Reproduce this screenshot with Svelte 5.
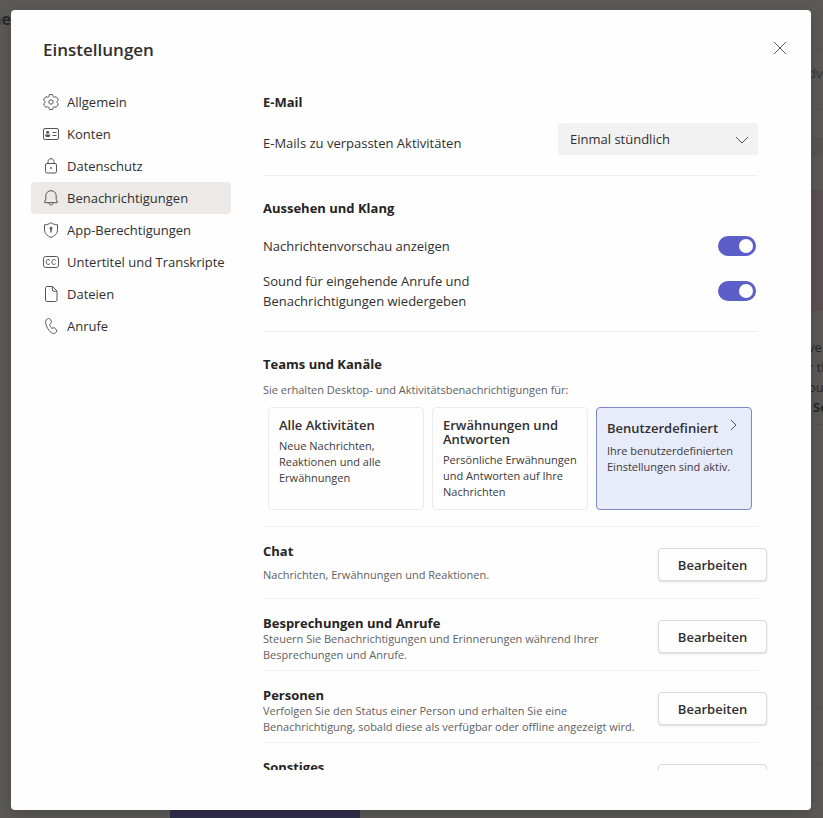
<script>
  const nav = [
    { id: 'gear', label: 'Allgemein' },
    { id: 'card', label: 'Konten' },
    { id: 'lock', label: 'Datenschutz' },
    { id: 'bell', label: 'Benachrichtigungen' },
    { id: 'shield', label: 'App-Berechtigungen' },
    { id: 'cc', label: 'Untertitel und Transkripte' },
    { id: 'file', label: 'Dateien' },
    { id: 'phone', label: 'Anrufe' }
  ];
  const modes = [
    { title: 'Alle Aktivitäten', text: 'Neue Nachrichten, Reaktionen und alle Erwähnungen' },
    { title: 'Erwähnungen und Antworten', text: 'Persönliche Erwähnungen und Antworten auf Ihre Nachrichten' },
    { title: 'Benutzerdefiniert', text: 'Ihre benutzerdefinierten Einstellungen sind aktiv.', more: true }
  ];
  const groups = [
    { title: 'Chat', text: 'Nachrichten, Erwähnungen und Reaktionen.', airy: true },
    { title: 'Besprechungen und Anrufe', text: 'Steuern Sie Benachrichtigungen und Erinnerungen während Ihrer Besprechungen und Anrufe.' },
    { title: 'Personen', text: 'Verfolgen Sie den Status einer Person und erhalten Sie eine Benachrichtigung, sobald diese als verfügbar oder offline angezeigt wird.' },
    { title: 'Sonstiges', text: '' }
  ];
  let active = $state('bell');
  let mode = $state(2);
  let preview = $state(true);
  let sound = $state(true);
  let mail = $state('hourly');
</script>

<div class="app">
  <div class="page" aria-hidden="true">
    <div class="left"><b>ne</b></div>
    <div class="tile"></div>
    <div class="right">
      <div class="bar"></div>
      <div class="tab">dv</div>
      <div class="strip"></div>
      <div class="band"></div>
      <div class="blank"></div>
      <div class="pink"></div>
      <div class="copy">ve<br />r th<br />ou<br /><b>So</b></div>
      <div class="post"></div>
      <div class="reply"></div>
    </div>
  </div>

  <div class="dialog" role="dialog" aria-labelledby="title">
    <header>
      <h1 id="title">Einstellungen</h1>
      <button class="close" aria-label="Schließen">
        <svg width="14" height="14" viewBox="0 0 14 14"><path d="M1 1l12 12M13 1L1 13" /></svg>
      </button>
    </header>

    <div class="body">
      <nav>
        {#each nav as item}
          <button class:active={active === item.id} onclick={() => (active = item.id)}>
            <svg width="16" height="16" viewBox="0 0 16 16">
              {#if item.id === 'gear'}
                <path d="M6.300.6 6 2.300c-.1.700-.8 1.100-1.500.9L2.900 2.600C1.800 3.600 1 4.900.6 6.200l1.300 1.100c.5.400.5 1 0 1.400L.6 9.800c.4 1.400 1.200 2.600 2.300 3.600l1.600-.6c.7-.2 1.400.2 1.500.9l.3 1.700c1.200.3 2.300.3 3.400 0l.3-1.700c.1-.7.8-1.100 1.500-.9l1.600.6c1.100-1 1.900-2.200 2.300-3.600l-1.300-1.100c-.5-.4-.5-1 0-1.400l1.300-1.100c-.4-1.300-1.200-2.600-2.300-3.600l-1.600.6c-.7.200-1.400-.2-1.500-.9L9.700.6c-1.100-.3-2.200-.3-3.400 0z" />
                <circle cx="8" cy="8" r="2.200" />
              {:else if item.id === 'card'}
                <rect x=".5" y="2.500" width="15" height="11" rx="1.500" />
                <path d="M9.500 6.500h4M9.500 9.500h4" />
                <circle class="fill" cx="4.700" cy="6.200" r="1.500" />
                <path class="fill" d="M2.200 8.500h5v1c0 1-1.100 1.600-2.500 1.600S2.200 10.500 2.200 9.500z" />
              {:else if item.id === 'lock'}
                <rect x="2.500" y="5.500" width="11" height="9.500" rx="1.500" />
                <path d="M5 5.500V3.800C5 2 6.200.7 8 .7s3 1.300 3 3.100v1.700" />
                <circle class="fill" cx="8" cy="10" r=".9" />
              {:else if item.id === 'bell'}
                <path d="M8 .7C5 .7 2.800 3 2.800 5.800v3.500l-1.200 2.800c-.1.300.1.600.4.600h12c.3 0 .5-.3.4-.6l-1.200-2.800V5.800C13.200 3 11 .7 8 .7zM6 12.800c.2 1.400 1 2.200 2 2.200s1.800-.8 2-2.200" />
              {:else if item.id === 'shield'}
                <path d="M8 .7c1.800 1.300 4 2 6.500 2.100v5c0 3.600-2.500 6.100-6.500 7.600-4-1.500-6.500-4-6.500-7.600v-5C4 2.700 6.200 2 8 .7z" />
                <path class="fill" d="M8 4.800a1.500 1.500 0 0 1 .7 2.800V10.500H7.300V7.600A1.500 1.500 0 0 1 8 4.800z" />
              {:else if item.id === 'cc'}
                <rect x=".5" y="2.500" width="15" height="11" rx="2.200" />
                <path d="M7 6.400C6.400 5.700 5.700 5.500 5 5.600 3.800 5.700 3.200 6.700 3.200 8s.6 2.300 1.800 2.400c.7.1 1.400-.1 2-.8M12.700 6.400c-.6-.7-1.300-.9-2-.8C9.500 5.700 8.900 6.700 8.900 8s.6 2.300 1.800 2.400c.7.1 1.400-.1 2-.8" />
              {:else if item.id === 'file'}
                <path d="M4 .5h5.500l4.500 4.500v9c0 .8-.7 1.500-1.500 1.500H4c-.8 0-1.500-.7-1.500-1.500V2C2.500 1.200 3.200.5 4 .5zM9.300.7V4c0 .8.500 1.200 1.200 1.200h3.300" />
              {:else}
                <path d="M4.600.9 5.700.6c.8-.2 1.500.2 1.800.9l.8 1.900c.3.600.1 1.300-.4 1.800L6.600 6.400c0 1 1.300 3.300 2.300 3.900l1.700-.5c.7-.2 1.300.1 1.700.6l1.200 1.700c.4.600.4 1.400-.1 1.900l-.8.700c-.8.700-1.900 1-2.900.600C6.200 14 2.600 8.200 2.600 3.600c0-1.200.8-2.300 2-2.700z" />
              {/if}
            </svg>
            {item.label}
          </button>
        {/each}
      </nav>

      <main>
        <section>
          <h2>E-Mail</h2>
          <div class="row mail">
            <label for="mail">E-Mails zu verpassten Aktivitäten</label>
            <div class="select">
              <select id="mail" bind:value={mail}>
                <option value="hourly">Einmal stündlich</option>
                <option value="daily">Täglich</option>
                <option value="off">Aus</option>
              </select>
              <svg width="14" height="8" viewBox="0 0 14 8"><path d="M1 1l6 6 6-6" /></svg>
            </div>
          </div>
        </section>

        <section>
          <h2>Aussehen und Klang</h2>
          <div class="rows">
            <div class="row">
              <label for="preview">Nachrichtenvorschau anzeigen</label>
              <input id="preview" type="checkbox" role="switch" bind:checked={preview} />
            </div>
            <div class="row">
              <label for="sound">Sound für eingehende Anrufe und Benachrichtigungen wiedergeben</label>
              <input id="sound" type="checkbox" role="switch" bind:checked={sound} />
            </div>
          </div>
        </section>

        <section class="teams">
          <h2>Teams und Kanäle</h2>
          <p class="hint">Sie erhalten Desktop- und Aktivitätsbenachrichtigungen für:</p>
          <div class="cards">
            {#each modes as m, i}
              <button class:selected={mode === i} aria-pressed={mode === i} onclick={() => (mode = i)}>
                <span class="head">
                  <strong>{m.title}</strong>
                  {#if m.more}
                    <svg width="7" height="12" viewBox="0 0 7 12"><path d="M1 1l5 5-5 5" /></svg>
                  {/if}
                </span>
                <span class="text">{m.text}</span>
              </button>
            {/each}
          </div>
        </section>

        {#each groups as g}
          <section class="group">
            <div class="about" class:airy={g.airy}>
              <h2>{g.title}</h2>
              <p class="hint">{g.text}</p>
            </div>
            <button class="edit" aria-label={`${g.title} bearbeiten`}>Bearbeiten</button>
          </section>
        {/each}
      </main>
    </div>
  </div>
</div>

<style>
  :global(body) { margin: 0; }
  .app, .app * { box-sizing: border-box; }
  .app {
    position: relative;
    height: 100vh;
    padding: 10px 12px 8px 11px;
    overflow: hidden;
    background: #5b5a58;
    color: #302f2e;
    font: 13px/20px "Segoe UI", "Open Sans", "Noto Sans", sans-serif;
  }
  button, select { font: inherit; color: inherit; margin: 0; }
  button { cursor: pointer; }
  svg { fill: none; stroke: #555; stroke-width: 1; flex: none; }
  svg .fill { fill: #555; stroke: none; }
  h1, h2, p { margin: 0; }

  .page { position: absolute; inset: 0; display: flex; justify-content: space-between; color: #292827; }
  .left { width: 11px; height: 50px; padding-top: 9px; border-bottom: 1px solid #575654; font-size: 16px; display: flex; justify-content: flex-end; overflow: hidden; }
  .tile { width: 190px; height: 10px; align-self: flex-end; margin-right: auto; margin-left: 159px; background: #312f4c; }
  .right { width: 15px; overflow: hidden; white-space: nowrap; display: flex; flex-direction: column; }
  .right > div { flex: none; border-bottom: 1px solid #545351; }
  .bar { height: 50px; }
  .tab { height: 60px; padding-top: 13px; color: #383735; }
  .strip { height: 29px; }
  .band { height: 16px; background: #575654; }
  .blank { height: 36px; }
  .right .pink { height: 120px; background: #5c5053; border: 0; }
  .copy { height: 114px; padding-top: 26px; }
  .copy b { padding-left: 5px; }
  .post { height: 283px; }
  .reply { height: 57px; }

  .dialog {
    position: relative;
    height: 100%;
    padding: 22px 32px 40px 20px;
    display: flex;
    flex-direction: column;
    border-radius: 4px;
    background: #fefefe;
    box-shadow: 0 4px 16px rgba(0, 0, 0, 0.2);
  }
  header { height: 54px; padding: 4px 0 0 12px; display: flex; align-items: flex-start; justify-content: space-between; }
  h1 { font-size: 17px; line-height: 28px; font-weight: 600; }
  .close { width: 28px; height: 24px; margin-right: -15px; padding: 0; border: 0; background: none; display: grid; place-items: center; }
  .body { flex: 1; min-height: 0; display: flex; gap: 32px; }

  nav { width: 200px; flex: none; }
  nav button {
    width: 100%;
    height: 32px;
    padding: 0 0 0 12px;
    display: flex;
    align-items: center;
    gap: 8px;
    border: 0;
    border-radius: 4px;
    background: none;
    white-space: nowrap;
  }
  nav .active { background: #ebeae8; }

  main { flex: 1; min-width: 0; padding: 6px 12px 0 0; overflow: hidden; }
  section { margin-right: 9px; padding: 22px 0 20px; border-bottom: 1px solid #f0efee; }
  section:first-child { padding-top: 0; }
  h2 { font-size: 13px; line-height: 20px; font-weight: 700; color: #252423; }
  .row { display: flex; align-items: center; justify-content: space-between; }
  .row label { max-width: 240px; }
  .mail { margin-top: 11px; height: 32px; }
  .mail label { padding-top: 8px; }
  .rows { margin-top: 18px; padding-right: 2px; display: grid; gap: 15px; }

  .select { position: relative; width: 200px; }
  .select select { appearance: none; display: block; width: 100%; height: 32px; padding: 0 32px 0 12px; border: 0; border-radius: 4px; background: #f3f2f2; }
  .select svg { position: absolute; right: 9px; top: 13px; pointer-events: none; }

  input[type="checkbox"] { appearance: none; width: 38px; height: 20px; margin: 0; padding: 3px; border-radius: 10px; background: #8a8886; display: flex; }
  input[type="checkbox"]::before { content: ""; width: 14px; height: 14px; border-radius: 50%; background: #fff; }
  input[type="checkbox"]:checked { background: #5b5fc7; justify-content: flex-end; }

  .hint { font-size: 11px; line-height: 16px; color: #616161; }
  .teams { padding-bottom: 16px; }
  .teams .hint { margin-top: 8px; }
  .cards { margin: 9px 6px 0 5px; display: grid; grid-template-columns: repeat(3, 1fr); gap: 8px; }
  .cards button { min-height: 103px; padding: 10px 4px 8px 10px; display: flex; flex-direction: column; gap: 6px; border: 1px solid #ebebeb; border-radius: 4px; background: #fefefe; text-align: left; }
  .cards .selected { gap: 8px; border-color: #7f85c9; background: #e8ebfa; }
  .head { display: flex; gap: 12px; }
  .head strong { font-weight: 600; line-height: 14px; }
  .head svg { margin-top: 1px; }
  .selected .head strong { padding-top: 3px; }
  .cards .text { font-size: 11px; line-height: 16px; color: #3b3a39; }

  .group { padding: 0; height: 72px; display: flex; gap: 8px; justify-content: space-between; }
  .about { padding-top: 16px; flex: 1; min-width: 0; }
  .about h2 { line-height: 16px; }
  .airy h2 { margin-bottom: 8px; }
  .edit { width: 109px; height: 33px; margin: 21px -9px 0 0; padding: 0; flex: none; border: 1px solid #dcdbda; border-radius: 4px; background: #fefefe; font-weight: 600; line-height: 30px; box-shadow: 0 1px 2px rgba(0, 0, 0, 0.14); }
</style>
